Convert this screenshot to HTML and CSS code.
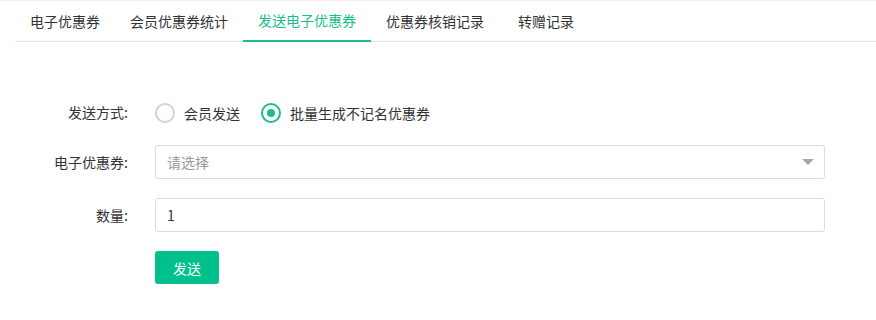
FILE: index.html
```html
<!DOCTYPE html>
<html lang="zh-CN">
<head>
<meta charset="utf-8">
<title>发送电子优惠券</title>
<link rel="stylesheet" href="styles.css">
</head>
<body>
<div class="page">
  <nav class="tabs">
    <a class="tab">电子优惠券</a>
    <a class="tab">会员优惠券统计</a>
    <a class="tab active">发送电子优惠券</a>
    <a class="tab">优惠券核销记录</a>
    <a class="tab">转赠记录</a>
  </nav>
  <form class="form">
    <div class="row row-radio">
      <label class="label label-up">发送方式:</label>
      <div class="field radios">
        <span class="radio"><span class="dot"></span><span class="rtext">会员发送</span></span>
        <span class="radio checked"><span class="dot"></span><span class="rtext">批量生成不记名优惠券</span></span>
      </div>
    </div>
    <div class="row">
      <label class="label">电子优惠券:</label>
      <div class="field select">
        <span class="placeholder">请选择</span>
        <span class="caret"></span>
      </div>
    </div>
    <div class="row">
      <label class="label">数量:</label>
      <div class="field input">1</div>
    </div>
    <div class="row">
      <span class="label"></span>
      <button type="button" class="btn">发送</button>
    </div>
  </form>
</div>
</body>
</html>
```

FILE: styles.css
```css
* { box-sizing: border-box; }
html, body {
  margin: 0;
  padding: 0;
  background: #fff;
}
body {
  font-family: "Noto Sans CJK SC", "Microsoft YaHei", "Noto Sans", sans-serif;
  font-size: 14px;
  color: #333;
}
.page {
  border-top: 1px solid #efefef;
}
.tabs {
  display: flex;
  margin-left: 15px;
  height: 41px;
  border-bottom: 1px solid #e5e5e5;
}
.tab {
  display: block;
  padding: 0 15px;
  line-height: 40px;
  height: 40px;
  color: #333;
  white-space: nowrap;
}
.tab:nth-child(5) { padding-left: 19px; }
.tab.active {
  color: #19be8b;
  border-bottom: 2px solid #19be8b;
  height: 41px;
  line-height: 39px;
}
.form {
  padding-top: 54px;
}
.row {
  display: flex;
  align-items: center;
  margin-bottom: 19px;
}
.row-radio {
  margin-bottom: 15px;
}
.label {
  width: 128px;
  flex: none;
  text-align: right;
  margin-right: 27px;
  color: #333;
}
.label-up {
  margin-top: -3px;
}
.field {
  width: 670px;
  height: 34px;
}
.radios {
  display: flex;
  align-items: center;
}
.radio {
  display: flex;
  align-items: center;
  margin-right: 21px;
}
.radio .dot {
  width: 20px;
  height: 20px;
  border: 2px solid #d2d2d2;
  border-radius: 50%;
  position: relative;
  margin-right: 9px;
}
.radio.checked .dot {
  border-color: #19be8b;
}
.radio.checked .dot::after {
  content: "";
  position: absolute;
  left: 4px;
  top: 4px;
  width: 8px;
  height: 8px;
  border-radius: 50%;
  background: #19be8b;
}
.rtext { color: #333; }
.select, .input {
  border: 1px solid #dcdcdc;
  border-radius: 3px;
  display: flex;
  align-items: center;
  padding: 0 10px 0 11px;
}
.placeholder {
  color: #999;
  flex: 1;
}
.caret {
  width: 0;
  height: 0;
  border-left: 6px solid transparent;
  border-right: 6px solid transparent;
  border-top: 6px solid #a8a8a8;
}
.input {
  color: #333;
}
.btn {
  width: 64px;
  height: 33px;
  border: none;
  border-radius: 3px;
  background: #00c18b;
  color: #fff;
  font-family: inherit;
  font-size: 14px;
  padding: 0;
}
```
